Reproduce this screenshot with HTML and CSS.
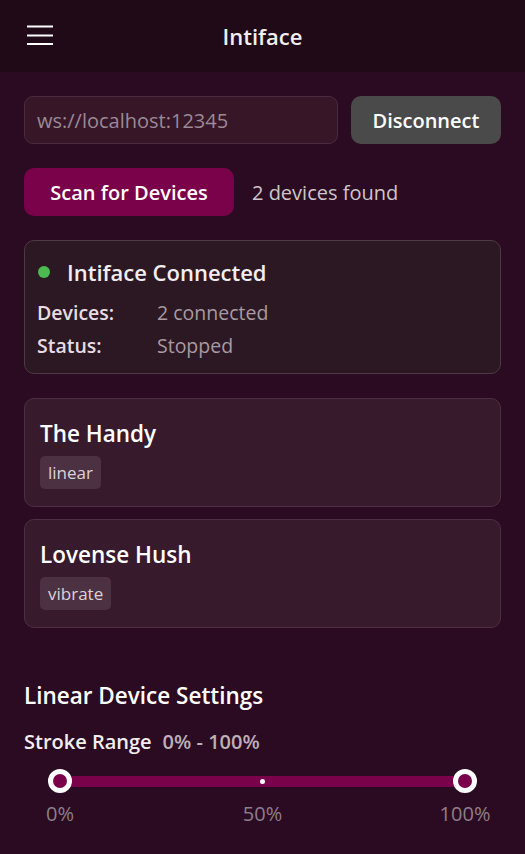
FILE: index.html
```html
<!DOCTYPE html>
<html>
<head>
<meta charset="utf-8">
<link rel="stylesheet" href="styles.css">
</head>
<body>
<header class="topbar">
  <button class="menu" aria-label="Menu">
    <svg width="28" height="20" viewBox="0 0 28 20"><path d="M1 1.5h26M1 10.5h26M1 19h26" stroke="#fff" stroke-width="2" fill="none"/></svg>
  </button>
  <h1 class="title">Intiface</h1>
</header>
<main class="content">
  <div class="connect-row">
    <input class="url" type="text" placeholder="ws://localhost:12345">
    <button class="btn btn-gray">Disconnect</button>
  </div>
  <div class="scan-row">
    <button class="btn btn-primary">Scan for Devices</button>
    <span class="found">2 devices found</span>
  </div>
  <section class="status-card">
    <div class="status-head"><span class="dot"></span><span class="status-title">Intiface Connected</span></div>
    <div class="kv"><span class="k">Devices:</span><span class="v">2 connected</span></div>
    <div class="kv"><span class="k">Status:</span><span class="v">Stopped</span></div>
  </section>
  <section class="device-card">
    <div class="device-name">The Handy</div>
    <span class="tag">linear</span>
  </section>
  <section class="device-card">
    <div class="device-name">Lovense Hush</div>
    <span class="tag">vibrate</span>
  </section>
  <section class="settings">
    <h2 class="settings-title">Linear Device Settings</h2>
    <div class="range-label"><span class="rl-name">Stroke Range</span><span class="rl-val">0% - 100%</span></div>
    <div class="slider">
      <div class="track"></div>
      <span class="mid"></span>
      <span class="thumb thumb-l"></span>
      <span class="thumb thumb-r"></span>
    </div>
    <div class="marks"><span>0%</span><span>50%</span><span>100%</span></div>
  </section>
</main>
</body>
</html>
```
FILE: styles.css
```css
* { box-sizing: border-box; }
html, body { margin: 0; padding: 0; }
body {
  background: #2b0b21;
  font-family: "Open Sans", "Noto Sans", sans-serif;
  color: #f2eef0;
  width: 525px;
  height: 854px;
  overflow: hidden;
}
.topbar {
  height: 72px;
  background: #200a18;
  display: flex;
  align-items: center;
  justify-content: center;
  position: relative;
}
.menu {
  position: absolute;
  left: 26px;
  top: 25px;
  background: none;
  border: 0;
  padding: 0;
  line-height: 0;
}
.title {
  margin: 0;
  font-size: 22px;
  font-weight: 600;
  color: #f3edf1;
}
.content {
  padding: 24px 24px 0 24px;
}
.connect-row {
  display: flex;
  gap: 13px;
  height: 48px;
}
.url {
  flex: 1;
  height: 48px;
  background: #371628;
  border: 1px solid #4a2a3e;
  border-radius: 9px;
  padding: 0 12px;
  font-family: inherit;
  font-size: 20px;
  color: #eee;
}
.url::placeholder { color: #9a8a94; }
.btn {
  border: 0;
  font-family: inherit;
  font-weight: 600;
  font-size: 20px;
  color: #fff;
  border-radius: 10px;
  height: 48px;
  padding: 0;
}
.btn-gray {
  width: 150px;
  background: #4a4a4a;
}
.btn-primary {
  width: 210px;
  background: #7a024b;
}
.scan-row {
  display: flex;
  align-items: center;
  gap: 18px;
  margin-top: 24px;
}
.found {
  font-size: 20px;
  color: #cfc5cb;
}
.status-card {
  margin-top: 24px;
  background: #2c1822;
  border: 1px solid #4c3a44;
  border-radius: 10px;
  padding: 16px 12px 12px 12px;
  height: 134px;
}
.status-head {
  display: flex;
  align-items: center;
  gap: 17px;
  margin-bottom: 9px;
}
.dot {
  width: 12px;
  height: 12px;
  border-radius: 50%;
  background: #4cbb4f;
  margin-left: 1px;
}
.status-title {
  font-size: 22px;
  font-weight: 600;
  line-height: 30px;
}
.kv {
  display: flex;
  font-size: 19.5px;
  line-height: 33px;
}
.k {
  width: 120px;
  font-weight: 600;
  color: #e6dde2;
}
.v { color: #a89aa2; }
.device-card {
  margin-top: 24px;
  background: #381a2d;
  border: 1px solid #4c2f42;
  border-radius: 10px;
  padding: 20px 15px 13px 15px;
  height: 109px;
}
.device-card + .device-card { margin-top: 12px; }
.device-name {
  font-size: 22.5px;
  font-weight: 600;
  line-height: 30px;
  color: #fff;
}
.tag {
  display: inline-block;
  margin-top: 7px;
  background: #4c3143;
  color: #ddd3d9;
  font-size: 17px;
  border-radius: 5px;
  padding: 0 8px;
  line-height: 33px;
}
.settings {
  margin-top: 52px;
}
.settings-title {
  margin: 0;
  font-size: 22.5px;
  font-weight: 600;
  line-height: 32px;
  color: #fff;
}
.range-label {
  margin-top: 17px;
  display: flex;
  gap: 11px;
  font-size: 20px;
  font-weight: 600;
  line-height: 26px;
}
.rl-val { color: #bdb0b8; }
.slider {
  position: relative;
  height: 24px;
  margin: 14px 24px 0 24px;
}
.track {
  position: absolute;
  left: 12px;
  right: 12px;
  top: 7px;
  height: 11px;
  background: #7a024b;
}
.mid {
  position: absolute;
  left: 50%;
  top: 10px;
  width: 5px;
  height: 5px;
  margin-left: -2.5px;
  border-radius: 50%;
  background: #fff;
}
.thumb {
  position: absolute;
  top: 0;
  width: 24px;
  height: 24px;
  border-radius: 50%;
  background: #7a024b;
  border: 5px solid #fff;
}
.thumb-l { left: 0; }
.thumb-r { right: 0; }
.marks {
  display: flex;
  justify-content: space-between;
  margin: 8px 36px 0 36px;
  font-size: 20px;
  line-height: 26px;
  color: #8c7f88;
}
.marks span {
  width: 0;
  display: flex;
  justify-content: center;
  white-space: nowrap;
}
```
